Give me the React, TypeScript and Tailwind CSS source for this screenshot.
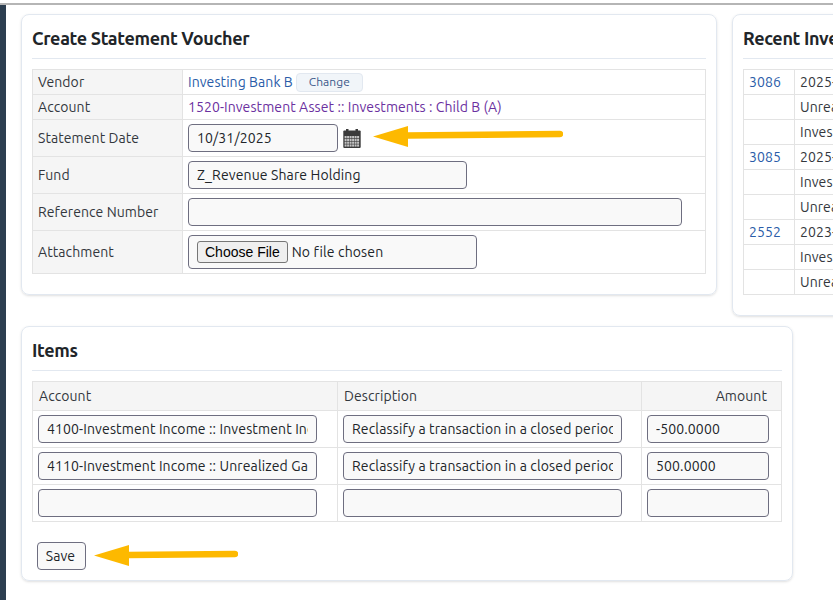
import React from "react";

const font = "font-['Ubuntu','Noto_Sans',sans-serif]";
const inputCls =
  "h-[28px] block bg-[#f9f9f9] border border-[#6e6e80] rounded-[4px] px-[8px] text-[14px] tracking-[0.13px] text-[#212529] outline-none";
const th = "bg-[#f5f5f5] border border-[#e3e3e3] font-normal text-left align-middle px-[5px] text-[#33373d]";
const td = "border border-[#e3e3e3] align-middle px-[5px] text-[#33373d]";
const heading =
  "h-[44px] pt-[9px] text-[18px] leading-[28px] font-semibold tracking-[-0.32px] text-[#212529] border-b border-[#e2e8f0] whitespace-nowrap";

function Calendar() {
  return (
    <svg width="18" height="19" viewBox="0 0 18 19" className="shrink-0 ml-[5px]">
      <rect x="3" y="0" width="2.5" height="4" fill="#3b3b3b" />
      <rect x="12.5" y="0" width="2.5" height="4" fill="#3b3b3b" />
      <rect x="0.3" y="1.5" width="17.4" height="17.5" rx="1" fill="#3b3b3b" />
      {[0, 1, 2, 3, 4, 5].map((c) =>
        [0, 1, 2, 3].map((r) => (
          <rect key={`${c}-${r}`} x={1.6 + c * 2.5} y={7 + r * 2.8} width="2" height="2.2" fill="#c4c4c4" />
        ))
      )}
    </svg>
  );
}

function Arrow({ width, y1, y2, className }: { width: number; y1: number; y2: number; className: string }) {
  return (
    <svg width={width} height="22" viewBox={`0 0 ${width} 22`} className={className}>
      <path d={`M34 ${y1} L${width - 3} ${y2}`} stroke="#fdb900" strokeWidth="6.5" strokeLinecap="round" fill="none" />
      <polygon points="0,10.5 35,0 35,21" fill="#fdb900" />
    </svg>
  );
}

const recent = [
  ["3086", "2025-10-31"],
  ["", "Unrealized"],
  ["", "Investment"],
  ["3085", "2025-09-30"],
  ["", "Investment"],
  ["", "Unrealized"],
  ["2552", "2023-12-31"],
  ["", "Investment"],
  ["", "Unrealized"],
];

const items = [
  ["4100-Investment Income :: Investment Income", "Reclassify a transaction in a closed period", "-500.0000"],
  ["4110-Investment Income :: Unrealized Gain", "Reclassify a transaction in a closed period", "500.0000"],
  ["", "", ""],
];

export default function App() {
  return (
    <div className={`relative w-[833px] h-[600px] overflow-hidden bg-white text-[14px] tracking-[0.08px] ${font}`}>
      <div className="h-[5px] bg-white border-b-2 border-[#b5b5b5]" />
      <div className="flex h-[595px]">
        <div className="w-[6px] shrink-0 bg-[#2c3e50]" />
        <div className="flex-1 min-w-0 pl-[15px] pt-[9px]">
          <div className="flex items-start gap-[15px] w-[1000px]">
            <section className="relative w-[696px] h-[281px] shrink-0 border border-[#e2e8f0] rounded-[8px] px-[10px] shadow-sm">
              <h2 className={heading}>Create Statement Voucher</h2>
              <table className="mt-[10px] w-[674px] table-fixed border-collapse">
                <colgroup>
                  <col className="w-[150px]" />
                  <col />
                </colgroup>
                <tbody>
                  <tr className="h-[25px]">
                    <th className={th}>Vendor</th>
                    <td className={td}>
                      <span className="flex items-center gap-[3px]">
                        <span className="text-[#2a5ca8]">Investing Bank B</span>
                        <span className="w-[67px] h-[19px] flex items-center justify-center bg-[#f1f5f9] border border-[#e2e8f0] rounded-[4px] text-[12px] text-[#3d5a8a]">
                          Change
                        </span>
                      </span>
                    </td>
                  </tr>
                  <tr className="h-[25px]">
                    <th className={th}>Account</th>
                    <td className={td}>
                      <span className="text-[#6b30a0]">1520-Investment Asset :: Investments : Child B (A)</span>
                    </td>
                  </tr>
                  <tr className="h-[37px]">
                    <th className={th}>Statement Date</th>
                    <td className={td}>
                      <div className="flex items-center">
                        <input readOnly value="10/31/2025" className={`${inputCls} w-[150px]`} />
                        <Calendar />
                      </div>
                    </td>
                  </tr>
                  <tr className="h-[37px]">
                    <th className={th}>Fund</th>
                    <td className={td}>
                      <input readOnly value="Z_Revenue Share Holding" className={`${inputCls} w-[279px]`} />
                    </td>
                  </tr>
                  <tr className="h-[37px]">
                    <th className={th}>Reference Number</th>
                    <td className={td}>
                      <input readOnly value="" className={`${inputCls} w-[494px]`} />
                    </td>
                  </tr>
                  <tr className="h-[43px]">
                    <th className={th}>Attachment</th>
                    <td className={td}>
                      <input
                        type="file"
                        className={`${inputCls} !h-[34px] w-[289px] !py-[5px] file:h-[22px] file:mr-[4px] file:px-[7px] file:bg-[#efefef] file:border file:border-[#767676] file:rounded-[3px] file:text-[#000] file:text-[14px] file:tracking-normal file:font-['Liberation_Sans']`}
                      />
                    </td>
                  </tr>
                </tbody>
              </table>
            </section>

            <section className="w-[260px] h-[302px] shrink-0 border border-[#e2e8f0] rounded-[8px] px-[10px] shadow-sm">
              <h2 className={heading}>Recent Investment Vouchers</h2>
              <table className="mt-[10px] w-[238px] table-fixed border-collapse">
                <colgroup>
                  <col className="w-[51px]" />
                  <col />
                </colgroup>
                <tbody>
                  {recent.map((r, i) => (
                    <tr key={i} className="h-[25px]">
                      <td className={td}>
                        <span className="text-[#2a5ca8]">{r[0]}</span>
                      </td>
                      <td className={td}>{r[1]}</td>
                    </tr>
                  ))}
                </tbody>
              </table>
            </section>
          </div>

          <section className="mt-[10px] w-[772px] h-[255px] border border-[#e2e8f0] rounded-[8px] px-[10px] shadow-sm">
            <h2 className={heading}>Items</h2>
            <table className="mt-[10px] w-[750px] table-fixed border-collapse">
              <colgroup>
                <col className="w-[305px]" />
                <col className="w-[304px]" />
                <col />
              </colgroup>
              <thead>
                <tr className="h-[29px]">
                  <th className={`${th} !px-[6px]`}>Account</th>
                  <th className={`${th} !px-[6px]`}>Description</th>
                  <th className={`${th} !text-right !pr-[14px]`}>Amount</th>
                </tr>
              </thead>
              <tbody>
                {items.map((r, i) => (
                  <tr key={i} className="h-[37px]">
                    <td className={td}>
                      <input readOnly value={r[0]} className={`${inputCls} w-[279px]`} />
                    </td>
                    <td className={td}>
                      <input readOnly value={r[1]} className={`${inputCls} w-[279px]`} />
                    </td>
                    <td className={td}>
                      <input readOnly value={r[2]} className={`${inputCls} w-[122px]`} />
                    </td>
                  </tr>
                ))}
              </tbody>
            </table>
            <button className="block mt-[20px] ml-[5px] w-[49px] h-[28px] pr-[2px] bg-[#f9f9f9] border border-[#6e6e80] rounded-[4px] text-[14px] text-[#212529]">
              Save
            </button>
          </section>
        </div>
      </div>
      <Arrow width={190} y1={9.5} y2={8} className="absolute left-[373px] top-[126px]" />
      <Arrow width={144} y1={10} y2={9} className="absolute left-[94px] top-[545px]" />
    </div>
  );
}
